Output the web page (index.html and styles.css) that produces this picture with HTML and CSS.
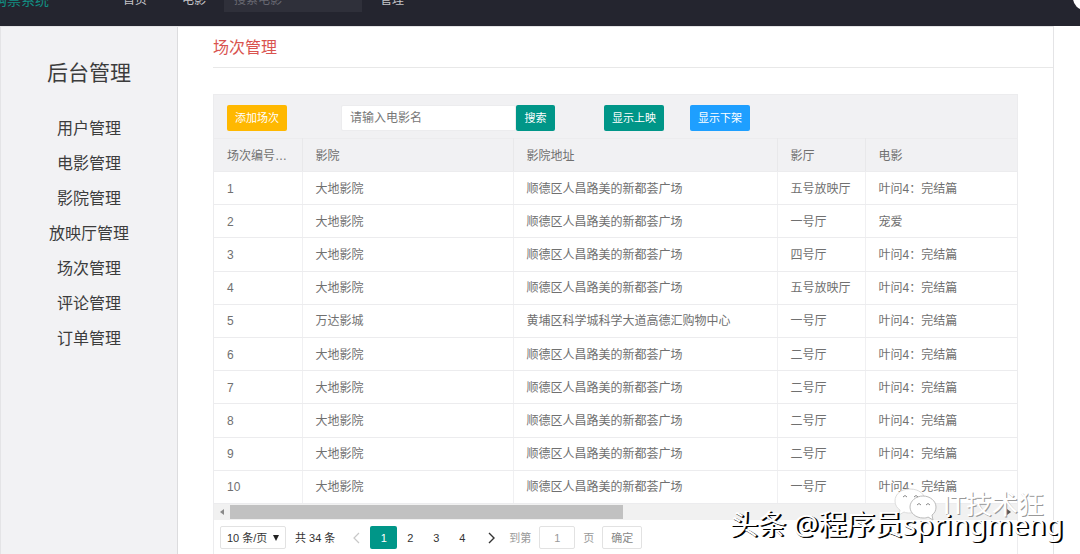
FILE: index.html
```html
<!DOCTYPE html>
<html lang="zh-CN">
<head>
<meta charset="utf-8">
<title>场次管理</title>
<link rel="stylesheet" href="styles.css">
</head>
<body>
<header class="topbar">
  <a class="logo" href="#">购票系统</a>
  <nav class="topnav">
    <a href="#">首页</a>
    <a href="#">电影</a>
    <input class="top-search" type="text" placeholder="搜索电影" aria-label="搜索电影">
    <a href="#">管理</a>
  </nav>
  <span class="avatar"></span>
</header>
<div class="page">
  <aside class="sidebar">
    <h2 class="side-title">后台管理</h2>
    <nav class="side-nav">
      <a href="#">用户管理</a>
      <a href="#">电影管理</a>
      <a href="#">影院管理</a>
      <a href="#">放映厅管理</a>
      <a href="#">场次管理</a>
      <a href="#">评论管理</a>
      <a href="#">订单管理</a>
    </nav>
  </aside>
  <main class="content">
    <h1 class="heading">场次管理</h1>
    <section class="panel">
      <div class="toolbar">
        <button class="btn btn-add" type="button">添加场次</button>
        <div class="search">
          <input type="text" placeholder="请输入电影名" aria-label="电影名">
          <button class="btn" type="button">搜索</button>
        </div>
        <button class="btn btn-show" type="button">显示上映</button>
        <button class="btn btn-off" type="button">显示下架</button>
      </div>
      <table class="grid">
        <colgroup><col class="c1"><col class="c2"><col class="c3"><col class="c4"><col class="c5"></colgroup>
        <thead>
          <tr><th>场次编号排序</th><th>影院</th><th>影院地址</th><th>影厅</th><th>电影</th></tr>
        </thead>
        <tbody>
          <tr><td>1</td><td>大地影院</td><td>顺德区人昌路美的新都荟广场</td><td>五号放映厅</td><td>叶问4：完结篇</td></tr>
          <tr><td>2</td><td>大地影院</td><td>顺德区人昌路美的新都荟广场</td><td>一号厅</td><td>宠爱</td></tr>
          <tr><td>3</td><td>大地影院</td><td>顺德区人昌路美的新都荟广场</td><td>四号厅</td><td>叶问4：完结篇</td></tr>
          <tr><td>4</td><td>大地影院</td><td>顺德区人昌路美的新都荟广场</td><td>五号放映厅</td><td>叶问4：完结篇</td></tr>
          <tr><td>5</td><td>万达影城</td><td>黄埔区科学城科学大道高德汇购物中心</td><td>一号厅</td><td>叶问4：完结篇</td></tr>
          <tr><td>6</td><td>大地影院</td><td>顺德区人昌路美的新都荟广场</td><td>二号厅</td><td>叶问4：完结篇</td></tr>
          <tr><td>7</td><td>大地影院</td><td>顺德区人昌路美的新都荟广场</td><td>二号厅</td><td>叶问4：完结篇</td></tr>
          <tr><td>8</td><td>大地影院</td><td>顺德区人昌路美的新都荟广场</td><td>二号厅</td><td>叶问4：完结篇</td></tr>
          <tr><td>9</td><td>大地影院</td><td>顺德区人昌路美的新都荟广场</td><td>二号厅</td><td>叶问4：完结篇</td></tr>
          <tr><td>10</td><td>大地影院</td><td>顺德区人昌路美的新都荟广场</td><td>一号厅</td><td>叶问4：完结篇</td></tr>
        </tbody>
      </table>
      <div class="scrollbar">
        <svg width="16" height="16" viewBox="0 0 16 16"><path d="M10 5v6L6 8z" fill="#8a8a8a"/></svg>
        <div class="track"><div class="thumb"></div></div>
        <svg width="16" height="16" viewBox="0 0 16 16"><path d="M6 5v6l4-3z" fill="#555"/></svg>
      </div>
      <div class="pager">
        <select class="page-size" aria-label="每页条数"><option>10 条/页</option></select>
        <span class="total">共 34 条</span>
        <button class="pg" type="button" aria-label="上一页"><svg width="8" height="12" viewBox="0 0 8 12"><path d="M6 1L1 6l5 5" fill="none" stroke="#c8c8c8" stroke-width="1.2"/></svg></button>
        <button class="pg current" type="button">1</button>
        <button class="pg" type="button">2</button>
        <button class="pg" type="button">3</button>
        <button class="pg" type="button">4</button>
        <button class="pg next" type="button" aria-label="下一页"><svg width="8" height="12" viewBox="0 0 8 12"><path d="M1 1l5 5-5 5" fill="none" stroke="#333" stroke-width="1.4"/></svg></button>
        <label class="jump">到第 <input type="text" value="1"> 页</label>
        <button class="confirm" type="button">确定</button>
      </div>
    </section>
  </main>
</div>
<div class="mark-account">
  <svg width="46" height="34" viewBox="0 0 46 34">
    <g fill="#fff" stroke="#bbb" stroke-width="1">
      <path stroke="#ddd" d="M17 1C8 1 2 6 2 13c0 4 2 7 5 9l-1 5 5-3c2 1 4 1 6 1 9 0 15-5 15-12S26 1 17 1z"/>
      <path d="M30 8c-7 0-13 5-13 11s6 11 13 11c2 0 4 0 5-1l5 3-1-5c3-2 4-5 4-8 0-6-6-11-13-11z"/>
    </g>
    <g fill="none" stroke="#888"><path d="M10 9q2-3 4 0M21 9q2-3 4 0M24 17q2-3 4 0M33 17q2-3 4 0"/></g>
  </svg>
  <span>IT技术狂</span>
</div>
<div class="mark-author">头条 @程序员springmeng</div>
</body>
</html>
```
FILE: styles.css
```css
* { box-sizing: border-box; }
body {
  margin: 0;
  min-height: 100vh;
  display: flex;
  flex-direction: column;
  overflow: hidden;
  background: #fff;
  color: #707070;
  font: 12px/16px "Liberation Sans", "Noto Sans CJK SC", sans-serif;
}
a { color: inherit; text-decoration: none; }
button, input, select { font: inherit; color: inherit; margin: 0; }
button { cursor: pointer; border: 0; padding: 0; }

.topbar {
  display: flex;
  align-items: center;
  flex: none;
  height: 56px;
  margin-top: -30px;
  background: #24252f;
  color: #c4c4c8;
}
.logo { width: 124px; margin-left: -7px; padding-top: 4px; font-size: 14px; color: #128f83; }
.topnav { display: flex; align-items: center; flex: 1; margin-left: 6px; }
.topnav a { width: 59px; padding-top: 3px; }
.topnav a + input { margin-left: -17px; }
.top-search {
  width: 138px;
  height: 28px;
  margin-right: 18px;
  padding: 4px 10px 0;
  border: 0;
  background: #2f303a;
}
.top-search::placeholder { color: #686972; }
.avatar { width: 24px; height: 24px; margin-right: -17px; border-radius: 50%; background: #fff; }

.page { display: flex; flex: 1; margin-right: 26px; border: 1px solid #e4e4e6; border-bottom: 0; }
.sidebar {
  flex: none;
  width: 177px;
  padding-top: 30px;
  background: #f2f2f4;
  border-right: 1px solid #dcdcde;
  text-align: center;
  color: #3c3c3c;
}
.side-title { margin: 0 0 22px; font-size: 21px; line-height: 32px; font-weight: 400; }
.side-nav { display: flex; flex-direction: column; font-size: 16px; line-height: 35px; }

.content { flex: 1; min-width: 0; padding-left: 35px; }
.heading {
  margin: 0;
  padding-top: 1px;
  border-bottom: 1px solid #e8e8e8;
  color: #d9534f;
  font-size: 16px;
  line-height: 39px;
  font-weight: 400;
}
.panel { margin: 26px 35px 0 0; border: 1px solid #ececee; border-bottom: 0; }
.toolbar { display: flex; align-items: center; height: 43px; padding: 2px 13px 0; background: #f1f1f3; }
.btn { height: 26px; padding: 0 8px; border-radius: 2px; background: #009688; color: #fff; font-size: 11px; }
.btn-add { background: #ffb800; }
.btn-off { margin-left: 26px; background: #1e9fff; }
.btn-add, .btn-show, .btn-off { width: 60px; }
.search { display: flex; margin: 0 49px 0 54px; }
.search input { width: 175px; height: 26px; padding: 0 8px; border: 1px solid #ececee; border-radius: 2px; background: #fff; }
.search input::placeholder { color: #777; }
.search .btn { width: 39px; }

.grid { width: 100%; height: 366px; table-layout: fixed; border-collapse: collapse; }
.c1 { width: 88px; }
.c2 { width: 211px; }
.c3 { width: 264px; }
.c4 { width: 88px; }
.grid th, .grid td {
  height: 33px;
  padding: 1px 12px 0 13px;
  border-bottom: 1px solid #ececee;
  border-right: 1px solid #f0f0f2;
  text-align: left;
  font-weight: 400;
  white-space: nowrap;
  overflow: hidden;
  text-overflow: ellipsis;
}
.grid th { background: #f1f1f3; border-top: 1px solid #ececee; border-right-color: #e8e8ea; }
.grid th:last-child, .grid td:last-child { border-right: 0; }

.scrollbar { display: flex; height: 16px; background: #f1f1f1; }
.track { flex: 1; padding: 1px 0; }
.thumb { width: 51%; height: 14px; background: #c1c1c1; }

.pager { display: flex; align-items: center; height: 35px; padding-left: 6px; font-size: 11px; color: #333; }
.page-size {
  width: 66px;
  height: 23px;
  padding: 0 6px;
  appearance: none;
  border: 1px solid #e2e2e2;
  border-radius: 2px;
  background: #fff url("data:image/svg+xml,%3Csvg xmlns='http://www.w3.org/2000/svg' width='6' height='6'%3E%3Cpath d='M0 0h6L3 6z' fill='%23222'/%3E%3C/svg%3E") no-repeat right 6px center;
}
.total { margin: 0 9px; }
.pg { display: grid; place-items: center; width: 26px; height: 23px; background: none; }
.current { width: 27px; background: #009688; color: #fff; border-radius: 2px; }
.next { width: 34px; }
.jump { display: flex; align-items: center; gap: 8px; color: #999; }
.jump input { width: 36px; height: 23px; border: 1px solid #e2e2e2; border-radius: 2px; text-align: center; }
.confirm { width: 40px; height: 23px; margin-left: 8px; border: 1px solid #e2e2e2; border-radius: 2px; background: #fff; color: #888; }

.mark-account {
  position: absolute;
  right: 36px;
  bottom: 32px;
  display: flex;
  align-items: center;
  gap: 4px;
  color: #fff;
  font-size: 26px;
  line-height: 34px;
  text-shadow: 1px 1px 0 #999;
}
.mark-author {
  position: absolute;
  right: 17px;
  bottom: 12px;
  color: #fff;
  font-family: "Noto Sans", "Noto Sans CJK SC", sans-serif;
  font-size: 28px;
  line-height: 36px;
  text-shadow: 1px 1px 0 #000, 2px 1px 0 #000;
}
```
